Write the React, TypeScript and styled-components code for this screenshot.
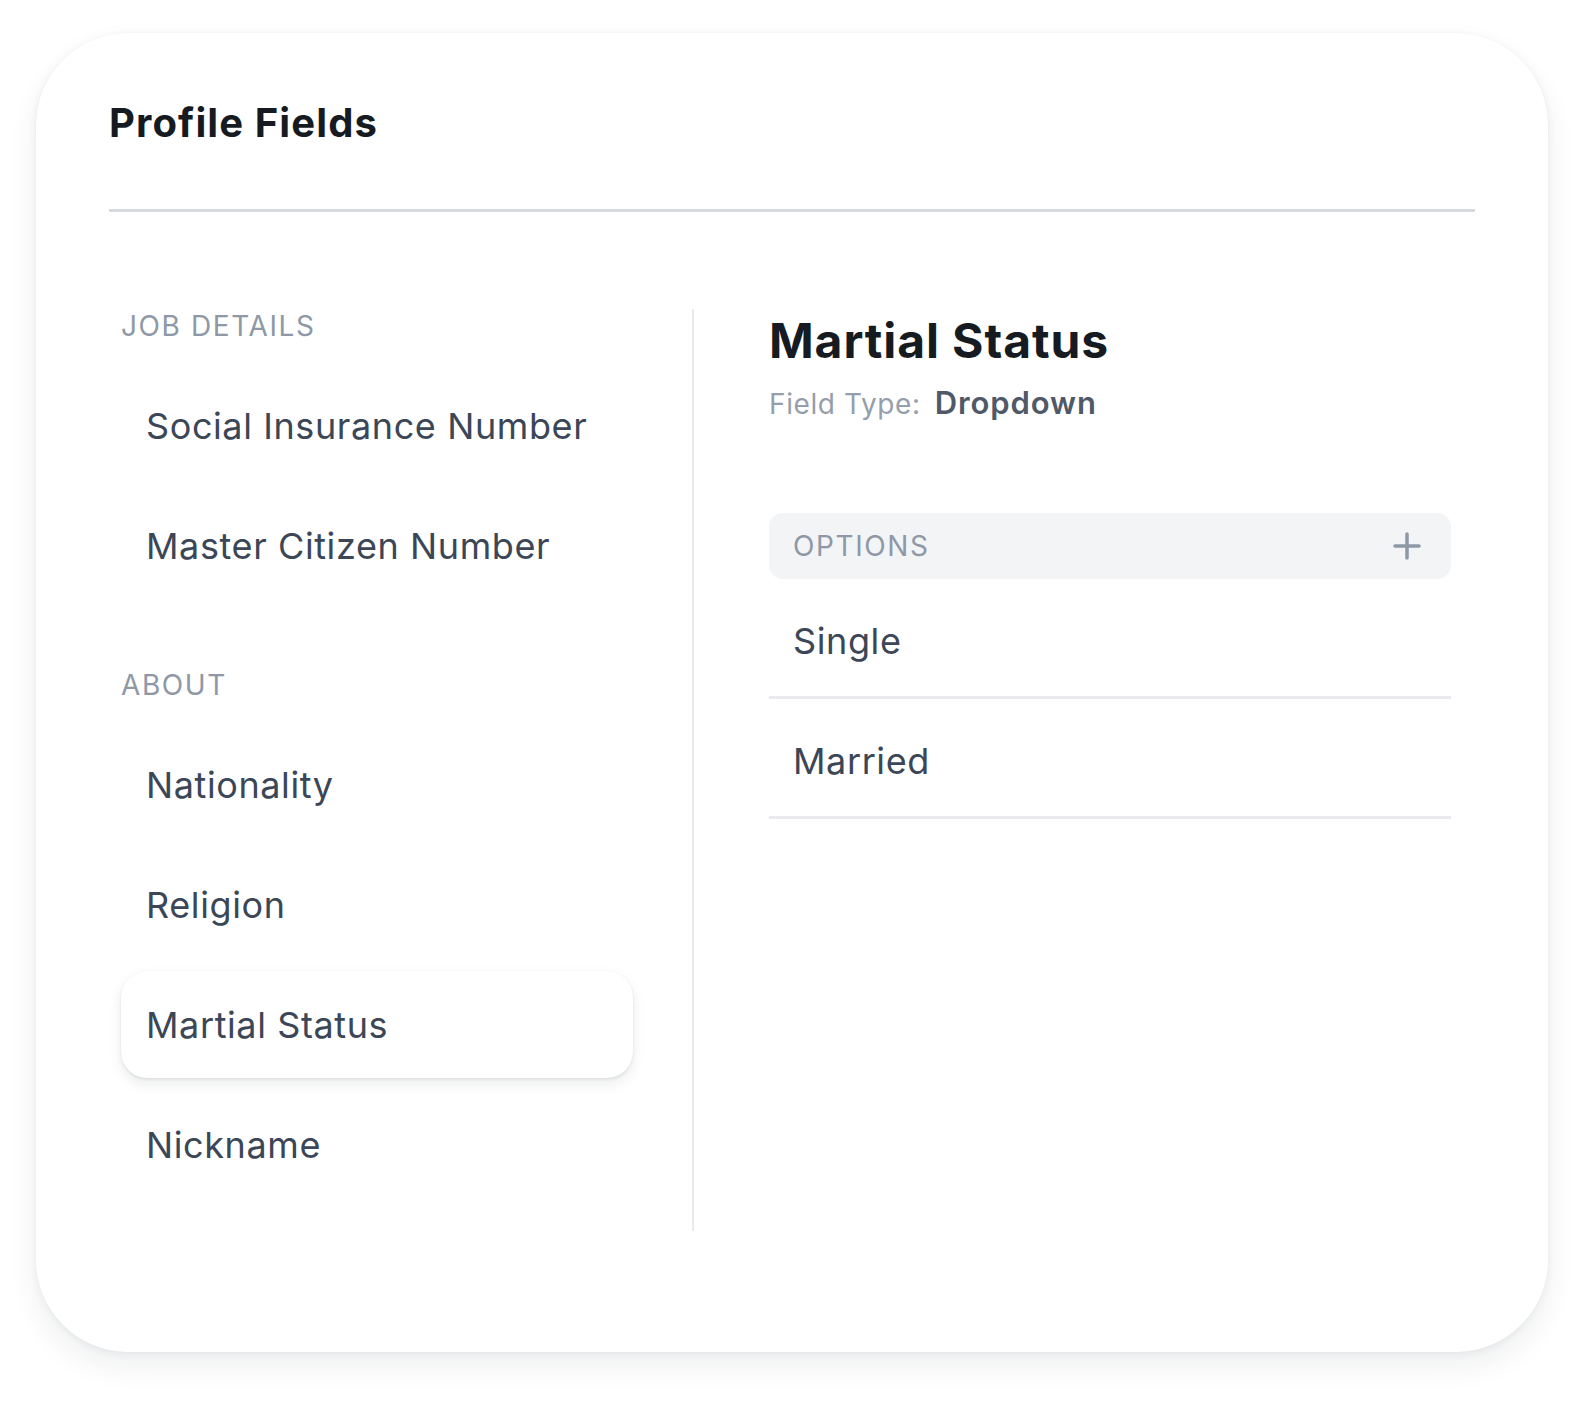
import styled, { createGlobalStyle } from 'styled-components';

const GlobalStyle = createGlobalStyle`
  html, body {
    margin: 0;
    padding: 0;
    background: #ffffff;
  }
  body {
    font-family: 'Inter', 'Noto Sans', sans-serif;
    -webkit-font-smoothing: antialiased;
  }
  * {
    box-sizing: border-box;
  }
`;

type Section = {
  title: string;
  fields: string[];
};

const sections: Section[] = [
  {
    title: 'Job Details',
    fields: ['Social Insurance Number', 'Master Citizen Number'],
  },
  {
    title: 'About',
    fields: ['Nationality', 'Religion', 'Martial Status', 'Nickname'],
  },
];

const options = ['Single', 'Married'];

const App = () => {
  const selected = 'Martial Status';

  return (
    <Page>
      <GlobalStyle />
      <Card>
        <CardHeader>
          <CardTitle>Profile Fields</CardTitle>
        </CardHeader>
        <Body>
          <FieldList>
            {sections.map((section) => (
              <SectionBlock key={section.title}>
                <SectionLabel>{section.title}</SectionLabel>
                <Items>
                  {section.fields.map((field) => (
                    <FieldItem key={field} $active={field === selected}>
                      {field}
                    </FieldItem>
                  ))}
                </Items>
              </SectionBlock>
            ))}
          </FieldList>
          <Detail>
            <DetailTitle>{selected}</DetailTitle>
            <FieldType>
              <TypeLabel>Field Type:</TypeLabel>
              <TypeValue>Dropdown</TypeValue>
            </FieldType>
            <OptionsHeader>
              <OptionsLabel>Options</OptionsLabel>
              <AddButton aria-label="Add option">
                <svg width="28" height="28" viewBox="0 0 28 28" fill="none">
                  <path
                    d="M14 2v24M2 14h24"
                    stroke="#8e98a6"
                    strokeWidth="3.5"
                    strokeLinecap="round"
                  />
                </svg>
              </AddButton>
            </OptionsHeader>
            {options.map((option) => (
              <OptionRow key={option}>{option}</OptionRow>
            ))}
          </Detail>
        </Body>
      </Card>
    </Page>
  );
};

const Page = styled.div`
  width: 1584px;
  min-height: 1410px;
  padding: 33px 36px 58px;
`;

const Card = styled.div`
  background: #ffffff;
  border-radius: 92px;
  box-shadow: 0 14px 30px rgba(17, 24, 39, 0.07), 0 2px 8px rgba(17, 24, 39, 0.05),
    0 0 2px rgba(17, 24, 39, 0.04);
  padding: 66px 73px 120px;
  height: 1319px;
`;

const CardHeader = styled.div`
  border-bottom: 3px solid #d5d9e0;
  padding-bottom: 62px;
`;

const CardTitle = styled.h1`
  margin: 0;
  font-size: 40px;
  line-height: 48px;
  font-weight: 700;
  color: #161b22;
  letter-spacing: 1.1px;
`;

const Body = styled.div`
  display: flex;
  margin-top: 97px;
`;

const FieldList = styled.div`
  width: 585px;
  padding: 0 59px 33px 12px;
  border-right: 2px solid #e8eaee;
  display: flex;
  flex-direction: column;
  gap: 69px;
  flex-shrink: 0;
`;

const SectionBlock = styled.div`
  display: flex;
  flex-direction: column;
  gap: 29px;
`;

const SectionLabel = styled.div`
  font-size: 28px;
  line-height: 34px;
  text-transform: uppercase;
  color: #8e98a6;
  letter-spacing: 1.6px;
`;

const Items = styled.div`
  display: flex;
  flex-direction: column;
  gap: 13px;
`;

const FieldItem = styled.div<{ $active: boolean }>`
  height: 107px;
  padding: 0 25px;
  display: flex;
  align-items: center;
  border-radius: 26px;
  font-size: 36px;
  letter-spacing: 0.6px;
  color: #3b4656;
  background: ${(props) => (props.$active ? '#ffffff' : 'transparent')};
  box-shadow: ${(props) =>
    props.$active
      ? '0 6px 14px rgba(17, 24, 39, 0.08), 0 2px 3px rgba(17, 24, 39, 0.07), 0 0 1px rgba(17, 24, 39, 0.08)'
      : 'none'};
`;

const Detail = styled.div`
  flex: 1;
  padding: 0 24px 0 75px;
  display: flex;
  flex-direction: column;
`;

const DetailTitle = styled.h2`
  margin: 0;
  padding-top: 3px;
  font-size: 48px;
  line-height: 58px;
  font-weight: 700;
  color: #161b22;
  letter-spacing: 0.9px;
`;

const FieldType = styled.div`
  display: flex;
  align-items: baseline;
  gap: 14px;
  margin-top: 14px;
`;

const TypeLabel = styled.span`
  font-size: 28px;
  color: #959eab;
  letter-spacing: 0.6px;
`;

const TypeValue = styled.span`
  font-size: 31px;
  font-weight: 600;
  color: #4f5968;
  letter-spacing: 0.9px;
`;

const OptionsHeader = styled.div`
  margin-top: 92px;
  height: 66px;
  border-radius: 14px;
  background: #f3f4f6;
  display: flex;
  align-items: center;
  justify-content: space-between;
  padding: 0 30px 0 24px;
`;

const OptionsLabel = styled.span`
  font-size: 28px;
  text-transform: uppercase;
  color: #8e98a6;
  letter-spacing: 1.6px;
`;

const AddButton = styled.button`
  border: none;
  background: none;
  padding: 0;
  display: flex;
  cursor: pointer;
`;

const OptionRow = styled.div`
  height: 120px;
  display: flex;
  align-items: center;
  padding: 7px 24px 0;
  font-size: 36px;
  letter-spacing: 0.6px;
  color: #3b4656;
  border-bottom: 3px solid #e8eaee;
`;

export default App;
